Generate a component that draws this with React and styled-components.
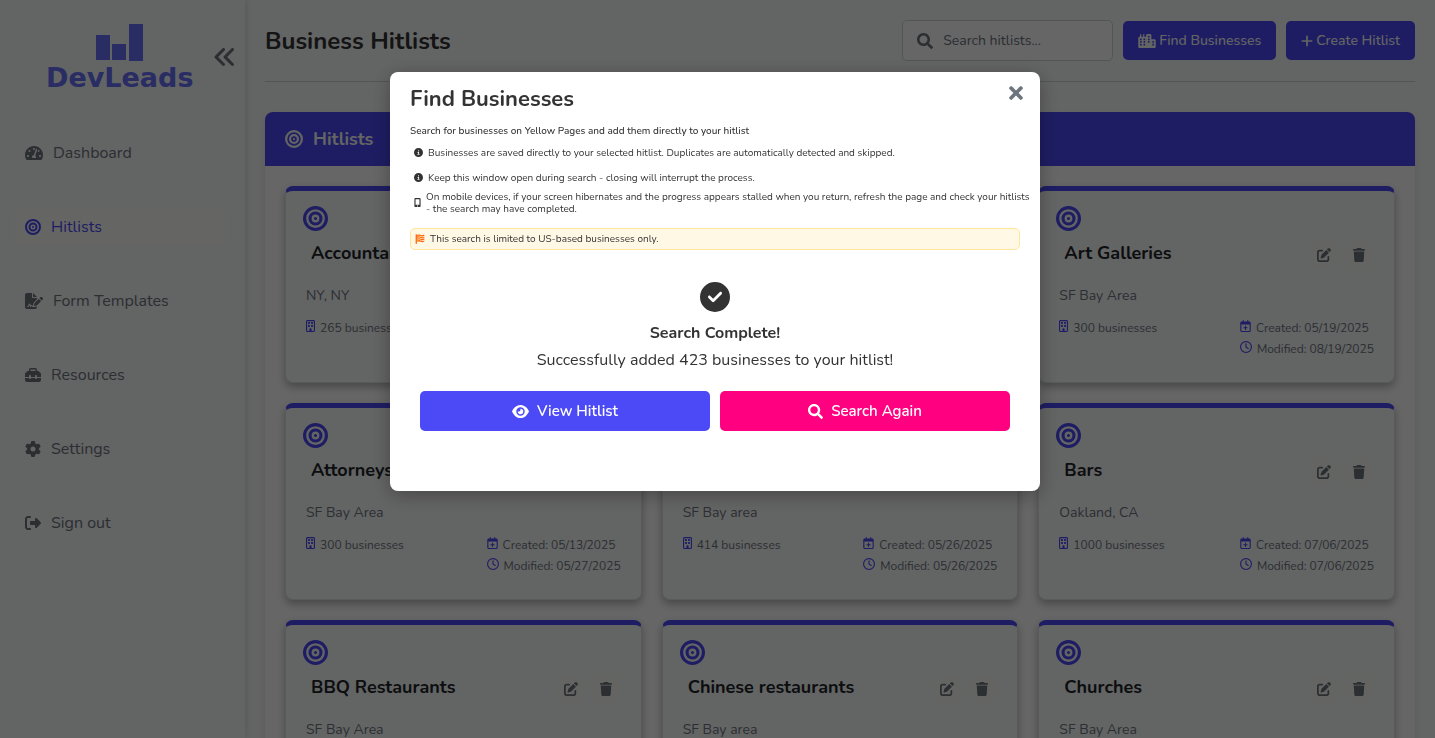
import React from "react";
import styled, { createGlobalStyle } from "styled-components";
import { FaSearch, FaTachometerAlt, FaTimes } from "react-icons/fa";
import {
  FaAnglesLeft,
  FaBullseye,
  FaCircleCheck,
  FaCircleInfo,
  FaCity,
  FaEye,
  FaFileSignature,
  FaFlagUsa,
  FaGear,
  FaMobileScreenButton,
  FaPenToSquare,
  FaPlus,
  FaRegBuilding,
  FaRegCalendarPlus,
  FaRegClock,
  FaRightFromBracket,
  FaToolbox,
  FaTrash,
} from "react-icons/fa6";

const blue = "#4c49f7";
const pink = "#ff0080";
const gray = "#6c757d";
const ink = "#333333";

const GlobalStyle = createGlobalStyle`
  *, *::before, *::after { box-sizing: border-box; }
  body {
    margin: 0;
    overflow: hidden;
    background: #f8f9fa;
    color: ${ink};
    font-family: Nunito, Lato, "Open Sans", sans-serif;
    font-size: 16px;
  }
  h1, h2, h3, p, ul { margin: 0; padding: 0; }
  ul { list-style: none; }
  button, input { font-family: inherit; }
  button { cursor: pointer; border: 0; }
  svg { display: block; flex: none; }
`;

/* Holds an icon whose glyph is wider or narrower than its height. */
const IconBox = styled.span`
  display: flex;
  flex: none;
  svg { width: ${(p) => p.$width}px; }
`;

const Shell = styled.div`
  display: flex;
  height: 100vh;
  overflow: hidden;
`;

const Sidebar = styled.aside`
  flex: none;
  width: 245px;
  padding: 24px 20px 0 15px;
  background: #f8f9fa;
  box-shadow: 2px 0 5px rgba(0, 0, 0, 0.1);
`;

const Brand = styled.div`
  display: flex;
  align-items: center;
  justify-content: space-between;
  height: 66px;
  margin: 0 -12px 44px 31px;
`;

const Logo = styled.a`
  display: flex;
  flex-direction: column;
  align-items: center;
  color: #6670fa;
  font: bold 27px/24px "DejaVu Sans", sans-serif;
  text-decoration: none;
`;

const LogoText = styled.span`
  margin-top: 4px;
`;

const CollapseButton = styled.button`
  padding: 0;
  background: none;
  color: ${gray};
  font-size: 24px;
`;

const NavList = styled.ul`
  display: flex;
  flex-direction: column;
  gap: 36px;
`;

const NavLink = styled.a`
  display: flex;
  align-items: center;
  gap: 10px;
  height: 38px;
  padding: 0 10px;
  border-radius: 5px;
  background: ${(p) => (p.$active ? "#fdfff9" : "transparent")};
  color: ${(p) => (p.$active ? blue : gray)};
  font-size: 16px;
  text-decoration: none;
`;

const Main = styled.main`
  flex: 1;
  min-width: 0;
  padding: 20px;
`;

const PageHeader = styled.header`
  display: flex;
  align-items: center;
  justify-content: space-between;
  padding-bottom: 20px;
  margin-bottom: 30px;
  border-bottom: 1px solid #ced4da;
`;

const PageTitle = styled.h1`
  font-size: 24px;
  line-height: 32px;
`;

const Toolbar = styled.div`
  display: flex;
  align-items: center;
  gap: 10px;
`;

const SearchBox = styled.label`
  display: flex;
  align-items: center;
  gap: 10px;
  width: 211px;
  height: 41px;
  padding: 0 14px;
  border: 1px solid #ced4da;
  border-radius: 5px;
  background: #fff;
  color: ${gray};
`;

const SearchInput = styled.input`
  flex: 1;
  min-width: 0;
  padding: 0;
  border: 0;
  outline: 0;
  background: none;
  font-size: 14px;
  &::placeholder { color: ${gray}; opacity: 1; }
`;

const ToolbarButton = styled.button`
  display: flex;
  align-items: center;
  justify-content: center;
  gap: 3px;
  height: 39px;
  padding: 0 15px;
  border-radius: 5px;
  background: ${blue};
  color: #f8f9fa;
  font-size: 14px;
  font-weight: 500;
`;

const Panel = styled.section`
  border-radius: 8px;
  background: #fff;
  box-shadow: 0 4px 6px rgba(0, 0, 0, 0.1);
`;

const PanelTitle = styled.h2`
  display: flex;
  align-items: center;
  gap: 10px;
  height: 54px;
  padding: 0 20px;
  border-radius: 8px 8px 0 0;
  background: ${blue};
  color: #f8f9fa;
  font-size: 18px;
`;

const CardGrid = styled.div`
  display: grid;
  grid-template-columns: repeat(3, minmax(0, 1fr));
  gap: 20px;
  padding: 20px;
`;

const Card = styled.article`
  height: 197px;
  padding: 15px 20px 0;
  border: 1px solid #dee2e6;
  border-top: 5px solid ${blue};
  border-radius: 8px;
  background: #f8f9fa;
  box-shadow: 0 4px 8px rgba(0, 0, 0, 0.3);
`;

const CardIcon = styled.div`
  margin-left: -3px;
  color: ${blue};
  font-size: 25px;
`;

const CardHead = styled.div`
  display: flex;
  align-items: center;
  gap: 5px;
  height: 30px;
  margin-top: 9px;
  padding-left: 5px;
`;

const CardTitle = styled.h3`
  flex: 1;
  padding-bottom: 4px;
  color: #212529;
  font-size: 18px;
  line-height: 24px;
`;

const RoundButton = styled.button`
  display: grid;
  place-items: center;
  width: 30px;
  height: 30px;
  padding: 0;
  border-radius: 50%;
  background: #fafcf6;
  color: ${gray};
  font-size: 14px;
`;

const Location = styled.p`
  margin-top: 16px;
  color: ${gray};
  font-size: 14px;
  line-height: 20px;
`;

const Meta = styled.div`
  display: flex;
  justify-content: space-between;
  margin-top: 12px;
`;

const MetaItem = styled.p`
  display: flex;
  gap: 5px;
  color: ${gray};
  font-size: 12px;
  line-height: 21px;
  svg { margin-top: 2px; color: ${blue}; }
`;

const Overlay = styled.div`
  position: fixed;
  inset: 0;
  display: flex;
  justify-content: center;
  align-items: flex-start;
  padding: 72px 5px 0 0;
  background: rgba(0, 0, 0, 0.6);
`;

const Modal = styled.section`
  width: 650px;
  max-width: 100%;
  padding: 12px 20px 60px;
  border-radius: 8px;
  background: #fff;
  box-shadow: 0 4px 20px rgba(0, 0, 0, 0.3);
`;

const ModalHead = styled.div`
  display: flex;
  align-items: center;
  justify-content: space-between;
  height: 30px;
  margin-right: -6px;
`;

const ModalTitle = styled.h2`
  font-size: 22px;
  line-height: 30px;
`;

const CloseButton = styled.button`
  padding: 0 0 12px;
  background: none;
  color: ${gray};
  font-size: 20px;
`;

const Lead = styled.p`
  margin: 9px 0 0;
  font-size: 10px;
  font-weight: 500;
  line-height: 17px;
`;

const Notes = styled.ul`
  margin-right: -12px;
`;

const Note = styled.li`
  display: flex;
  align-items: center;
  gap: 5px;
  height: 25px;
  padding-left: 4px;
  font-size: 10px;
  line-height: 12px;
  svg { font-size: 9px; }
`;

const Warning = styled.p`
  display: flex;
  align-items: center;
  gap: 5px;
  height: 22px;
  margin-top: 13px;
  padding-left: 4px;
  border: 1px solid #ffe69c;
  border-radius: 5px;
  background: #fff8e5;
  font-size: 10px;
  svg { color: #ff6b0a; }
`;

const Result = styled.div`
  display: flex;
  flex-direction: column;
  align-items: center;
  margin-top: 32px;
  padding: 0 10px;
  line-height: 24px;
`;

const ResultTitle = styled.h3`
  margin: 9px 0 3px;
  font-size: 16px;
`;

const Actions = styled.div`
  display: grid;
  grid-template-columns: 1fr 1fr;
  gap: 10px;
  width: 100%;
  margin-top: 19px;
`;

const ActionButton = styled.button`
  display: flex;
  align-items: center;
  justify-content: center;
  gap: 8px;
  height: 40px;
  border-radius: 5px;
  background: ${(p) => p.$color};
  color: #fff;
  font-size: 15px;
  font-weight: 600;
`;

const navItems = [
  { label: "Dashboard", Icon: FaTachometerAlt, width: 18 },
  { label: "Hitlists", Icon: FaBullseye, width: 16, active: true },
  { label: "Form Templates", Icon: FaFileSignature, width: 18 },
  { label: "Resources", Icon: FaToolbox, width: 16 },
  { label: "Settings", Icon: FaGear, width: 16 },
  { label: "Sign out", Icon: FaRightFromBracket, width: 16 },
];

const hitlists = [
  ["Accountants", "NY, NY", 265, "05/13/2025", "05/27/2025"],
  ["Architects", "SF Bay Area", 300, "05/19/2025", "08/19/2025"],
  ["Art Galleries", "SF Bay Area", 300, "05/19/2025", "08/19/2025"],
  ["Attorneys", "SF Bay Area", 300, "05/13/2025", "05/27/2025"],
  ["Bakeries", "SF Bay area", 414, "05/26/2025", "05/26/2025"],
  ["Bars", "Oakland, CA", 1000, "07/06/2025", "07/06/2025"],
  ["BBQ Restaurants", "SF Bay Area", 300, "05/19/2025", "05/27/2025"],
  ["Chinese restaurants", "SF Bay area", 300, "05/26/2025", "05/26/2025"],
  ["Churches", "SF Bay Area", 300, "05/19/2025", "05/27/2025"],
];

function LogoBars() {
  return (
    <svg width="47" height="38" viewBox="0 0 47 38" fill="currentColor" aria-hidden="true">
      <rect x="0" y="11" width="14" height="25" />
      <rect x="16" y="20" width="14" height="16" />
      <rect x="33" y="0" width="14" height="37" />
    </svg>
  );
}

function HitlistCard({ data }) {
  const [name, place, count, created, modified] = data;
  return (
    <Card>
      <CardIcon><FaBullseye /></CardIcon>
      <CardHead>
        <CardTitle>{name}</CardTitle>
        <RoundButton aria-label={`Edit ${name}`}><FaPenToSquare /></RoundButton>
        <RoundButton aria-label={`Delete ${name}`}><FaTrash /></RoundButton>
      </CardHead>
      <Location>{place}</Location>
      <Meta>
        <MetaItem><IconBox $width={9}><FaRegBuilding /></IconBox>{count} businesses</MetaItem>
        <div>
          <MetaItem><IconBox $width={11}><FaRegCalendarPlus /></IconBox>Created: {created}</MetaItem>
          <MetaItem><IconBox $width={12}><FaRegClock /></IconBox>Modified: {modified}</MetaItem>
        </div>
      </Meta>
    </Card>
  );
}

export default function App() {
  return (
    <>
      <GlobalStyle />
      <Shell>
        <Sidebar>
          <Brand>
            <Logo href="#home">
              <LogoBars />
              <LogoText>DevLeads</LogoText>
            </Logo>
            <CollapseButton aria-label="Collapse sidebar"><FaAnglesLeft /></CollapseButton>
          </Brand>
          <nav>
            <NavList>
              {navItems.map(({ label, Icon, width, active }) => (
                <li key={label}>
                  <NavLink href="#nav" $active={active}>
                    <IconBox $width={width}><Icon /></IconBox>
                    {label}
                  </NavLink>
                </li>
              ))}
            </NavList>
          </nav>
        </Sidebar>
        <Main>
          <PageHeader>
            <PageTitle>Business Hitlists</PageTitle>
            <Toolbar>
              <SearchBox>
                <FaSearch />
                <SearchInput type="text" placeholder="Search hitlists..." aria-label="Search hitlists" />
              </SearchBox>
              <ToolbarButton><IconBox $width={18}><FaCity /></IconBox>Find Businesses</ToolbarButton>
              <ToolbarButton><IconBox $width={12}><FaPlus /></IconBox>Create Hitlist</ToolbarButton>
            </Toolbar>
          </PageHeader>
          <Panel>
            <PanelTitle><FaBullseye />Hitlists</PanelTitle>
            <CardGrid>
              {hitlists.map((h) => <HitlistCard key={h[0]} data={h} />)}
            </CardGrid>
          </Panel>
        </Main>
      </Shell>
      <Overlay>
        <Modal role="dialog" aria-modal="true" aria-labelledby="dialog-title">
          <ModalHead>
            <ModalTitle id="dialog-title">Find Businesses</ModalTitle>
            <CloseButton aria-label="Close"><FaTimes /></CloseButton>
          </ModalHead>
          <Lead>Search for businesses on Yellow Pages and add them directly to your hitlist</Lead>
          <Notes>
            <Note>
              <FaCircleInfo />
              Businesses are saved directly to your selected hitlist. Duplicates are automatically detected and skipped.
            </Note>
            <Note>
              <FaCircleInfo />
              Keep this window open during search - closing will interrupt the process.
            </Note>
            <Note>
              <IconBox $width={7}><FaMobileScreenButton /></IconBox>
              On mobile devices, if your screen hibernates and the progress appears stalled when you return, refresh the page and check your hitlists - the search may have completed.
            </Note>
          </Notes>
          <Warning><FaFlagUsa />This search is limited to US-based businesses only.</Warning>
          <Result>
            <FaCircleCheck size={30} />
            <ResultTitle>Search Complete!</ResultTitle>
            <p>Successfully added 423 businesses to your hitlist!</p>
            <Actions>
              <ActionButton $color={blue}><IconBox $width={17}><FaEye /></IconBox>View Hitlist</ActionButton>
              <ActionButton $color={pink}><FaSearch />Search Again</ActionButton>
            </Actions>
          </Result>
        </Modal>
      </Overlay>
    </>
  );
}
